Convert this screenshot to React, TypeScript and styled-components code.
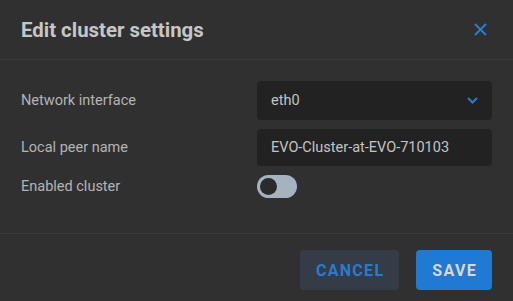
import React, { useState } from "react";
import styled, { createGlobalStyle } from "styled-components";

const GlobalStyle = createGlobalStyle`
  html, body {
    margin: 0;
    padding: 0;
    background: #303030;
  }
  body {
    font-family: Roboto, "Liberation Sans", sans-serif;
  }
`;

const Dialog = styled.div`
  width: 513px;
  height: 301px;
  background: #303030;
  display: flex;
  flex-direction: column;
  overflow: hidden;
`;

const Header = styled.div`
  height: 59px;
  display: flex;
  align-items: center;
  justify-content: space-between;
  padding: 0 26px 0 21px;
  border-bottom: 1px solid #3b3b3b;
`;

const Title = styled.h2`
  margin: 0;
  font-size: 20.4px;
  font-weight: 700;
  color: #c6c6c6;
`;

const CloseButton = styled.button`
  background: none;
  border: none;
  padding: 0;
  width: 14px;
  height: 14px;
  display: flex;
  align-items: center;
  justify-content: center;
  cursor: pointer;
`;

const Body = styled.div`
  display: grid;
  grid-template-columns: 236px 235px;
  row-gap: 9px;
  padding: 21px 21px 0;
  height: 174px;
  box-sizing: border-box;
  border-bottom: 1px solid #3b3b3b;
  align-content: start;
`;

const Label = styled.label`
  display: flex;
  align-items: center;
  font-size: 14.5px;
  color: #b4b4b4;
`;

const Field = styled.div<{ $h: number }>`
  height: ${(p) => p.$h}px;
  background: #222222;
  border-radius: 4px;
  display: flex;
  align-items: center;
  justify-content: space-between;
  padding: 0 14px;
  font-size: 14.5px;
  color: #c4c4c4;
`;

const Toggle = styled.div<{ $on: boolean }>`
  width: 40px;
  height: 23px;
  border-radius: 12px;
  background: #a5b3c1;
  display: flex;
  align-items: center;
  padding: 0 3px;
  box-sizing: border-box;
  justify-content: ${(p) => (p.$on ? "flex-end" : "flex-start")};
  cursor: pointer;

  > span {
    width: 17px;
    height: 17px;
    border-radius: 50%;
    background: #2b2b2b;
  }
`;

const Footer = styled.div`
  display: flex;
  justify-content: flex-end;
  gap: 17px;
  padding: 16px 21px 0;
`;

const Button = styled.button<{ $primary?: boolean }>`
  height: 40px;
  border: none;
  border-radius: 4px;
  padding: 0 15px 0 16px;
  font-family: Roboto, "Liberation Sans", sans-serif;
  font-size: 16px;
  font-weight: 700;
  letter-spacing: 1.3px;
  background: ${(p) => (p.$primary ? "#2079d3" : "#333c47")};
  color: ${(p) => (p.$primary ? "#d8d8d8" : "#2a7bd0")};
  cursor: pointer;
`;

const App: React.FC = () => {
  const [enabled, setEnabled] = useState(false);

  return (
    <Dialog>
      <GlobalStyle />
      <Header>
        <Title>Edit cluster settings</Title>
        <CloseButton aria-label="close">
          <svg width="13" height="13" viewBox="0 0 13 13">
            <path d="M1 1 L12 12 M12 1 L1 12" stroke="#2a7bd0" strokeWidth="2" />
          </svg>
        </CloseButton>
      </Header>
      <Body>
        <Label>Network interface</Label>
        <Field $h={39}>
          eth0
          <svg width="11" height="7" viewBox="0 0 11 7">
            <path d="M1 1 L5.5 5.5 L10 1" stroke="#2a7bd0" strokeWidth="2" fill="none" />
          </svg>
        </Field>
        <Label>Local peer name</Label>
        <Field $h={37}>EVO-Cluster-at-EVO-710103</Field>
        <Label>Enabled cluster</Label>
        <Toggle $on={enabled} onClick={() => setEnabled(!enabled)}>
          <span />
        </Toggle>
      </Body>
      <Footer>
        <Button>CANCEL</Button>
        <Button $primary>SAVE</Button>
      </Footer>
    </Dialog>
  );
};

export default App;
